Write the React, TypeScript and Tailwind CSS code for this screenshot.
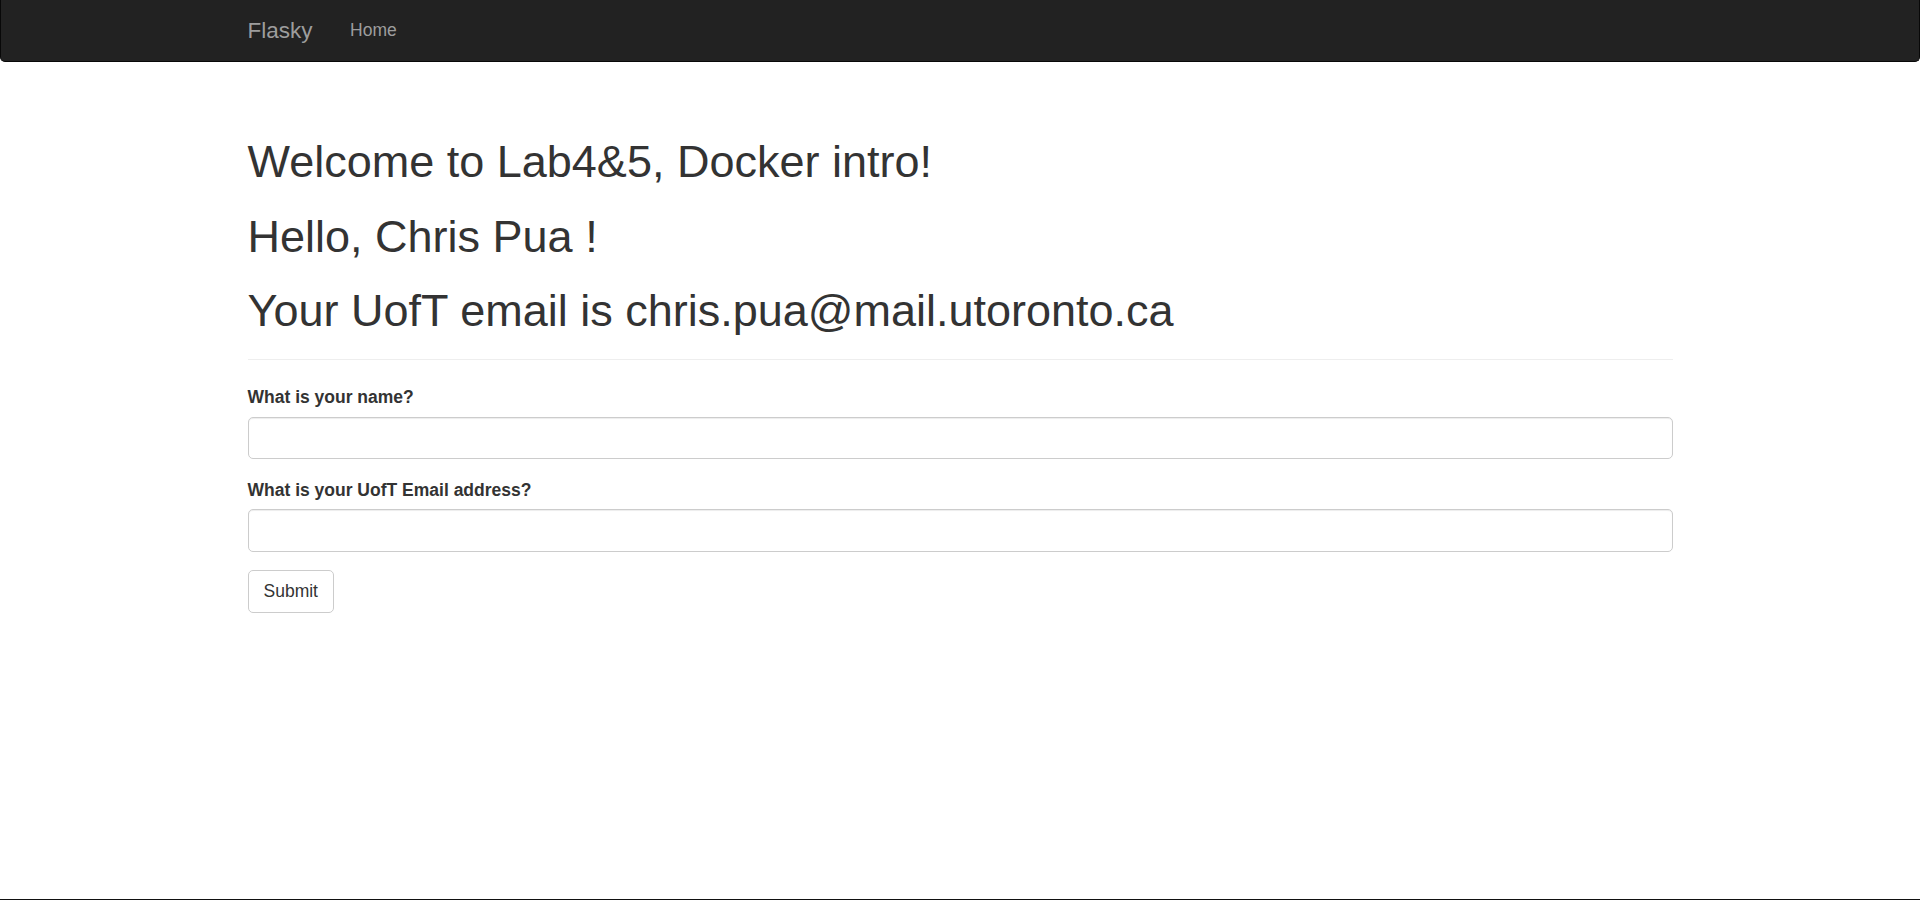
import { useState } from "react";

function Navbar() {
  return (
    <nav className="h-[62px] rounded-b-[5px] border-x border-b border-[#080808] bg-[#222]">
      <div className="mx-auto flex w-[1462.5px] items-start px-[18.75px] pt-[18px]">
        <a href="#" className="pr-[37.5px] text-[22.5px] leading-[25px] text-[#9d9d9d]">
          Flasky
        </a>
        <a href="#" className="text-[17.5px] leading-[25px] text-[#9d9d9d]">
          Home
        </a>
      </div>
    </nav>
  );
}

export default function App() {
  const [name, setName] = useState("");
  const [email, setEmail] = useState("");

  return (
    <div className="min-h-screen border-b border-[#111] bg-white font-['Liberation_Sans',Arial,sans-serif] text-[17.5px] leading-[25px] text-[#333]">
      <Navbar />

      <div className="mx-auto w-[1462.5px] px-[18.75px] pt-[25px]">
        {/* Page header */}
        <div className="mt-[50px] mb-[25px] flex flex-col gap-[25px] border-b border-[#eee] pb-[23.75px]">
          <h1 className="text-[45px] leading-[49.5px] font-normal">Welcome to Lab4&amp;5, Docker intro!</h1>
          <h1 className="text-[45px] leading-[49.5px] font-normal">Hello, Chris Pua !</h1>
          <h1 className="text-[45px] leading-[49.5px] font-normal">Your UofT email is chris.pua@mail.utoronto.ca</h1>
        </div>

        {/* Form */}
        <form onSubmit={(e) => e.preventDefault()}>
          <div className="mb-[18.75px]">
            <label className="mb-[6.25px] inline-block font-bold">What is your name?</label>
            <input
              type="text"
              value={name}
              onChange={(e) => setName(e.target.value)}
              className="block h-[42.5px] w-full rounded-[5px] border border-[#ccc] bg-white px-[15px] shadow-[inset_0_1px_1px_rgba(0,0,0,0.075)] outline-none"
            />
          </div>
          <div className="mb-[18.75px]">
            <label className="mb-[6.25px] inline-block font-bold">What is your UofT Email address?</label>
            <input
              type="text"
              value={email}
              onChange={(e) => setEmail(e.target.value)}
              className="block h-[42.5px] w-full rounded-[5px] border border-[#ccc] bg-white px-[15px] shadow-[inset_0_1px_1px_rgba(0,0,0,0.075)] outline-none"
            />
          </div>
          <button
            type="submit"
            className="h-[42.5px] rounded-[5px] border border-[#ccc] bg-white px-[15px] text-[#333]"
          >
            Submit
          </button>
        </form>
      </div>
    </div>
  );
}
